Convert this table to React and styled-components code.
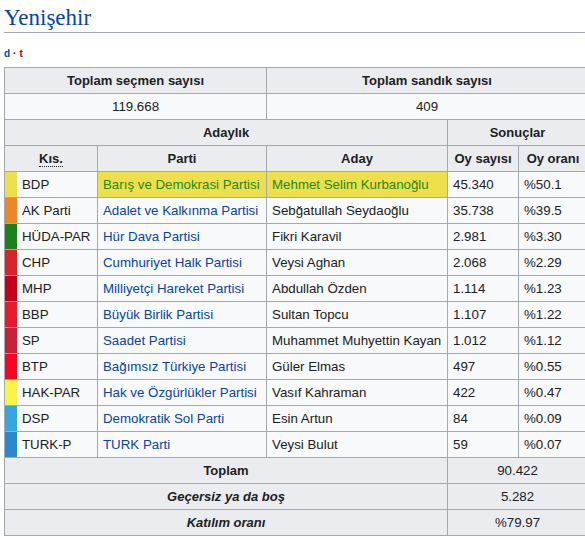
import React from "react";
import styled, { createGlobalStyle } from "styled-components";

const GlobalStyle = createGlobalStyle`
  html, body {
    margin: 0;
    padding: 0;
    background: #fff;
    overflow: hidden;
  }
  body {
    font-family: "Liberation Sans", Arial, sans-serif;
    color: #202122;
  }
`;

const parties = [
  { abbr: "BDP", color: "#eee04c", party: "Barış ve Demokrasi Partisi", cand: "Mehmet Selim Kurbanoğlu", votes: "45.340", pct: "%50.1", win: true },
  { abbr: "AK Parti", color: "#ed8529", party: "Adalet ve Kalkınma Partisi", cand: "Sebğatullah Seydaoğlu", votes: "35.738", pct: "%39.5" },
  { abbr: "HÜDA-PAR", color: "#19821d", party: "Hür Dava Partisi", cand: "Fikri Karavil", votes: "2.981", pct: "%3.30" },
  { abbr: "CHP", color: "#d8232a", party: "Cumhuriyet Halk Partisi", cand: "Veysi Aghan", votes: "2.068", pct: "%2.29" },
  { abbr: "MHP", color: "#c60019", party: "Milliyetçi Hareket Partisi", cand: "Abdullah Özden", votes: "1.114", pct: "%1.23" },
  { abbr: "BBP", color: "#e81b2e", party: "Büyük Birlik Partisi", cand: "Sultan Topcu", votes: "1.107", pct: "%1.22" },
  { abbr: "SP", color: "#c7213a", party: "Saadet Partisi", cand: "Muhammet Muhyettin Kayan", votes: "1.012", pct: "%1.12" },
  { abbr: "BTP", color: "#fd0223", party: "Bağımsız Türkiye Partisi", cand: "Güler Elmas", votes: "497", pct: "%0.55" },
  { abbr: "HAK-PAR", color: "#f9f446", party: "Hak ve Özgürlükler Partisi", cand: "Vasıf Kahraman", votes: "422", pct: "%0.47" },
  { abbr: "DSP", color: "#35a6df", party: "Demokratik Sol Parti", cand: "Esin Artun", votes: "84", pct: "%0.09" },
  { abbr: "TURK-P", color: "#2a88cf", party: "TURK Parti", cand: "Veysi Bulut", votes: "59", pct: "%0.07" },
];

const App = () => {
  return (
    <>
      <GlobalStyle />
      <Page>
        <Heading>Yenişehir</Heading>
        <Navbar>
          <NavLink>d</NavLink>
          <Dot>·</Dot>
          <NavLink $red>t</NavLink>
        </Navbar>
        <Table>
          <colgroup>
            <col style={{ width: 12 }} />
            <col style={{ width: 81 }} />
            <col style={{ width: 169 }} />
            <col style={{ width: 181 }} />
            <col style={{ width: 71 }} />
            <col style={{ width: 69 }} />
          </colgroup>
          <tbody>
            <tr>
              <Head colSpan={3}>Toplam seçmen sayısı</Head>
              <Head colSpan={3}>Toplam sandık sayısı</Head>
            </tr>
            <tr>
              <Cell colSpan={3} $center>119.668</Cell>
              <Cell colSpan={3} $center>409</Cell>
            </tr>
            <tr>
              <Head colSpan={4}>Adaylık</Head>
              <Head colSpan={2}>Sonuçlar</Head>
            </tr>
            <tr>
              <Head colSpan={2}>
                <Abbr title="Kısaltma">Kıs.</Abbr>
              </Head>
              <Head>Parti</Head>
              <Head>Aday</Head>
              <Head>Oy sayısı</Head>
              <Head>Oy oranı</Head>
            </tr>
            {parties.map((p) => (
              <tr key={p.abbr}>
                <Strip $color={p.color} />
                <Cell>{p.abbr}</Cell>
                <Cell $win={p.win}>
                  <PartyLink $win={p.win}>{p.party}</PartyLink>
                </Cell>
                <Cell $win={p.win}>{p.cand}</Cell>
                <Cell>{p.votes}</Cell>
                <Cell>{p.pct}</Cell>
              </tr>
            ))}
            <tr>
              <Head colSpan={4}>Toplam</Head>
              <Head colSpan={2} $plain>90.422</Head>
            </tr>
            <tr>
              <Head colSpan={4} $italic>Geçersiz ya da boş</Head>
              <Head colSpan={2} $plain>5.282</Head>
            </tr>
            <tr>
              <Head colSpan={4} $italic>Katılım oranı</Head>
              <Head colSpan={2} $plain>%79.97</Head>
            </tr>
          </tbody>
        </Table>
      </Page>
    </>
  );
};

export default App;

const Page = styled.div`
  padding-left: 4px;
`;

const Heading = styled.h2`
  margin: 0;
  padding-top: 3px;
  font-family: "Liberation Serif", "DejaVu Serif", serif;
  font-weight: normal;
  font-size: 23px;
  line-height: 29px;
  color: #0645ad;
  border-bottom: 1px solid #a2a9b1;
`;

const Navbar = styled.div`
  margin-top: 14px;
  height: 14px;
  font-size: 10px;
  line-height: 14px;
  font-weight: bold;
`;

const NavLink = styled.span`
  color: ${(p) => (p.$red ? "#ba0000" : "#0645ad")};
`;

const Dot = styled.span`
  margin: 0 3px;
  color: #202122;
`;

const Table = styled.table`
  margin-top: 6px;
  width: 583px;
  table-layout: fixed;
  border-collapse: collapse;
  border: 1px solid #a2a9b1;
  background: #f8f9fa;
  font-size: 13px;
  line-height: 19px;
`;

const Head = styled.th`
  border: 1px solid #a2a9b1;
  background: #eaecf0;
  padding: 3px 5px;
  text-align: center;
  white-space: nowrap;
  font-weight: ${(p) => (p.$plain ? "normal" : "bold")};
  font-style: ${(p) => (p.$italic ? "italic" : "normal")};
  font-size: ${(p) => (p.$plain ? "13.3px" : "13px")};
`;

const Cell = styled.td`
  border: 1px solid #a2a9b1;
  padding: 3px 5px;
  white-space: nowrap;
  font-size: 13.3px;
  text-align: ${(p) => (p.$center ? "center" : "left")};
  background: ${(p) => (p.$win ? "#eee04c" : "#f8f9fa")};
  color: ${(p) => (p.$win ? "#1f8a1f" : "#202122")};
`;

const Strip = styled.td`
  padding: 0;
  border: 1px solid #a2a9b1;
  border-right: 1px solid ${(p) => p.$color};
  background: ${(p) => p.$color};
`;

const PartyLink = styled.span`
  color: ${(p) => (p.$win ? "#1f8a1f" : "#0645ad")};
`;

const Abbr = styled.abbr`
  text-decoration: none;
  border-bottom: 1px dotted #202122;
`;
